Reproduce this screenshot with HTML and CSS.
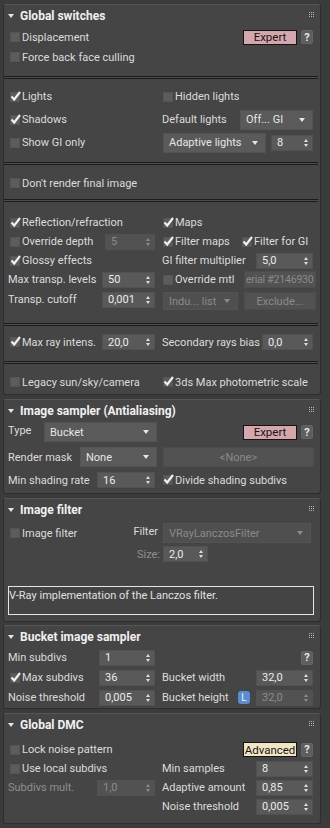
FILE: index.html
```html
<!DOCTYPE html>
<html>
<head>
<meta charset="utf-8">
<link rel="stylesheet" href="styles.css">
</head>
<body>
<div class="wrap">

<section class="roll r1">
  <header class="hd"><span class="tri"></span><span class="ttl">Global switches</span><svg class="grip" viewBox="0 0 5 5"><path d="M0 0h1v1H0zM2 0h1v1H2zM4 0h1v1H4zM0 2h1v1H0zM2 2h1v1H2zM4 2h1v1H4zM0 4h1v1H0zM2 4h1v1H2zM4 4h1v1H4z"/></svg></header>
  <div class="body">
    <div class="grp g1">
      <div class="row h20"><div class="cell l"><span class="chk"><i class="box"></i>Displacement</span></div><div class="cell r"><span class="btn expert">Expert</span><span class="q">?</span></div></div>
      <div class="row h20"><div class="cell l"><span class="chk"><i class="box"></i>Force back face culling</span></div><div class="cell r"></div></div>
    </div>
    <div class="sep"></div>
    <div class="grp g2">
      <div class="row h23"><div class="cell l"><span class="chk"><i class="box"><svg class="ck" viewBox="0 0 12 12"><path d="M1.5 6.5L4.2 9.5L10 2"/></svg></i>Lights</span></div><div class="cell r"><span class="chk"><i class="box"></i>Hidden lights</span></div></div>
      <div class="row h23"><div class="cell l"><span class="chk"><i class="box"><svg class="ck" viewBox="0 0 12 12"><path d="M1.5 6.5L4.2 9.5L10 2"/></svg></i>Shadows</span></div><div class="cell r"><span class="lbl">Default lights</span><span class="dd w73">Off... GI</span></div></div>
      <div class="row h23"><div class="cell l"><span class="chk"><i class="box"></i>Show GI only</span></div><div class="cell r"><span class="dd w103 first">Adaptive lights</span><span class="spin w42">8<i class="arr"></i></span></div></div>
    </div>
    <div class="sep"></div>
    <div class="grp g3">
      <div class="row h20"><div class="cell l"><span class="chk"><i class="box"></i>Don't render final image</span></div><div class="cell r"></div></div>
    </div>
    <div class="sep"></div>
    <div class="grp g4">
      <div class="row h19"><div class="cell l"><span class="chk"><i class="box"><svg class="ck" viewBox="0 0 12 12"><path d="M1.5 6.5L4.2 9.5L10 2"/></svg></i>Reflection/refraction</span></div><div class="cell r"><span class="chk"><i class="box"><svg class="ck" viewBox="0 0 12 12"><path d="M1.5 6.5L4.2 9.5L10 2"/></svg></i>Maps</span></div></div>
      <div class="row h19"><div class="cell l"><span class="chk"><i class="box"></i>Override depth</span><span class="spin w50 dis">5<i class="arr"></i></span></div><div class="cell r"><span class="chk fm"><i class="box"><svg class="ck" viewBox="0 0 12 12"><path d="M1.5 6.5L4.2 9.5L10 2"/></svg></i>Filter maps</span><span class="chk"><i class="box"><svg class="ck" viewBox="0 0 12 12"><path d="M1.5 6.5L4.2 9.5L10 2"/></svg></i>Filter for GI</span></div></div>
      <div class="row h19"><div class="cell l"><span class="chk"><i class="box"><svg class="ck" viewBox="0 0 12 12"><path d="M1.5 6.5L4.2 9.5L10 2"/></svg></i>Glossy effects</span></div><div class="cell r"><span class="lbl">GI filter multiplier</span><span class="spin w57">5,0<i class="arr"></i></span></div></div>
      <div class="row h19"><div class="cell l"><span class="lbl0">Max transp. levels</span><span class="spin w53">50<i class="arr"></i></span></div><div class="cell r"><span class="chk"><i class="box"></i>Override mtl</span><span class="field w72">erial #2146930</span></div></div>
      <div class="row h19"><div class="cell l"><span class="lbl0">Transp. cutoff</span><span class="spin w53">0,001<i class="arr"></i></span></div><div class="cell r"><span class="dd w75 first dis sm">Indu... list</span><span class="btn dbtn w72">Exclude...</span></div></div>
    </div>
    <div class="sep"></div>
    <div class="grp g5">
      <div class="row h20"><div class="cell l"><span class="chk"><i class="box"><svg class="ck" viewBox="0 0 12 12"><path d="M1.5 6.5L4.2 9.5L10 2"/></svg></i>Max ray intens.</span><span class="spin w53">20,0<i class="arr"></i></span></div><div class="cell r"><span class="lbl">Secondary rays bias</span><span class="spin w51">0,0<i class="arr"></i></span></div></div>
    </div>
    <div class="sep"></div>
    <div class="grp g6">
      <div class="row h20"><div class="cell l"><span class="chk"><i class="box"></i>Legacy sun/sky/camera</span></div><div class="cell r"><span class="chk"><i class="box"><svg class="ck" viewBox="0 0 12 12"><path d="M1.5 6.5L4.2 9.5L10 2"/></svg></i>3ds Max photometric scale</span></div></div>
    </div>
  </div>
</section>

<section class="roll r2">
  <header class="hd"><span class="tri"></span><span class="ttl">Image sampler (Antialiasing)</span><svg class="grip" viewBox="0 0 5 5"><path d="M0 0h1v1H0zM2 0h1v1H2zM4 0h1v1H4zM0 2h1v1H0zM2 2h1v1H2zM4 2h1v1H4zM0 4h1v1H0zM2 4h1v1H2zM4 4h1v1H4z"/></svg></header>
  <div class="body b2">
    <div class="row h22"><div class="cell l"><span class="lbl0 up">Type</span><span class="dd w113 over">Bucket</span></div><div class="cell r"><span class="btn expert">Expert</span><span class="q">?</span></div></div>
    <div class="row h22 mt3"><div class="cell l"><span class="lbl0">Render mask</span><span class="dd w77 over">None</span></div><div class="cell r"><span class="btn dbtn w151 first">&lt;None&gt;</span></div></div>
    <div class="row h18 mt3"><div class="cell l"><span class="lbl0">Min shading rate</span><span class="spin w58">16<i class="arr"></i></span></div><div class="cell r"><span class="chk"><i class="box"><svg class="ck" viewBox="0 0 12 12"><path d="M1.5 6.5L4.2 9.5L10 2"/></svg></i>Divide shading subdivs</span></div></div>
  </div>
</section>

<section class="roll r3">
  <header class="hd"><span class="tri"></span><span class="ttl">Image filter</span><svg class="grip" viewBox="0 0 5 5"><path d="M0 0h1v1H0zM2 0h1v1H2zM4 0h1v1H4zM0 2h1v1H0zM2 2h1v1H2zM4 2h1v1H4zM0 4h1v1H0zM2 4h1v1H2zM4 4h1v1H4z"/></svg></header>
  <div class="body b3">
    <div class="row h22"><div class="cell l"><span class="chk"><i class="box"></i>Image filter</span><span class="lbl0 flt">Filter</span></div><div class="cell r"><span class="dd w148 first dis">VRayLanczosFilter</span></div></div>
    <div class="row h18 mt1"><div class="cell l"><span class="lbl0 size dtxt">Size:</span></div><div class="cell r"><span class="spin w45 first">2,0<i class="arr"></i></span></div></div>
    <div class="desc">V-Ray implementation of the Lanczos filter.</div>
  </div>
</section>

<section class="roll r4">
  <header class="hd"><span class="tri"></span><span class="ttl">Bucket image sampler</span><svg class="grip" viewBox="0 0 5 5"><path d="M0 0h1v1H0zM2 0h1v1H2zM4 0h1v1H4zM0 2h1v1H0zM2 2h1v1H2zM4 2h1v1H4zM0 4h1v1H0zM2 4h1v1H2zM4 4h1v1H4z"/></svg></header>
  <div class="body b4">
    <div class="row h19"><div class="cell l"><span class="lbl0">Min subdivs</span><span class="spin w56">1<i class="arr"></i></span></div><div class="cell r"><span class="q">?</span></div></div>
    <div class="row h19 mt1"><div class="cell l"><span class="chk"><i class="box"><svg class="ck" viewBox="0 0 12 12"><path d="M1.5 6.5L4.2 9.5L10 2"/></svg></i>Max subdivs</span><span class="spin w56">36<i class="arr"></i></span></div><div class="cell r"><span class="lbl">Bucket width</span><span class="spin w57">32,0<i class="arr"></i></span></div></div>
    <div class="row h19 mt1"><div class="cell l"><span class="lbl0">Noise threshold</span><span class="spin w56">0,005<i class="arr"></i></span></div><div class="cell r"><span class="lbl">Bucket height</span><span class="lock">L</span><span class="spin w57 dis gap6">32,0<i class="arr"></i></span></div></div>
  </div>
</section>

<section class="roll r5">
  <header class="hd"><span class="tri"></span><span class="ttl">Global DMC</span><svg class="grip" viewBox="0 0 5 5"><path d="M0 0h1v1H0zM2 0h1v1H2zM4 0h1v1H4zM0 2h1v1H0zM2 2h1v1H2zM4 2h1v1H4zM0 4h1v1H0zM2 4h1v1H2zM4 4h1v1H4z"/></svg></header>
  <div class="body b5">
    <div class="row h19"><div class="cell l"><span class="chk"><i class="box"></i>Lock noise pattern</span></div><div class="cell r"><span class="btn adv">Advanced</span><span class="q">?</span></div></div>
    <div class="row h19"><div class="cell l"><span class="chk"><i class="box"></i>Use local subdivs</span></div><div class="cell r"><span class="lbl">Min samples</span><span class="spin w57">8<i class="arr"></i></span></div></div>
    <div class="row h19"><div class="cell l"><span class="lbl0 dtxt">Subdivs mult.</span><span class="spin w58 dis">1,0<i class="arr"></i></span></div><div class="cell r"><span class="lbl">Adaptive amount</span><span class="spin w57">0,85<i class="arr"></i></span></div></div>
    <div class="row h19"><div class="cell l"></div><div class="cell r"><span class="lbl">Noise threshold</span><span class="spin w57">0,005<i class="arr"></i></span></div></div>
  </div>
</section>

</div>
</body>
</html>
```

FILE: styles.css
```css
* { box-sizing: border-box; }
html, body { margin: 0; padding: 0; }
body {
  width: 330px;
  height: 828px;
  overflow: hidden;
  background: #3b3b3b;
  font-family: Roboto, "Liberation Sans", Arial, sans-serif;
  font-size: 11px;
  color: #dcdcdc;
}
.wrap {
  display: flex;
  flex-direction: column;
  padding: 4px 9px 0 3px;
}
.roll {
  background: #454545;
  border: 1px solid #2e2e2e;
  border-top-color: #565656;
  border-radius: 3px;
}
.r2, .r3, .r5 { margin-top: 4px; }
.r4 { margin-top: 3px; }

/* header */
.hd {
  height: 21px;
  display: flex;
  align-items: center;
  padding: 0 6px 0 4px;
}
.tri {
  width: 0; height: 0;
  border-left: 3px solid transparent;
  border-right: 3px solid transparent;
  border-top: 4px solid #e6e6e6;
  margin-right: 6px;
}
.ttl {
  font-weight: 700;
  font-size: 12px;
  color: #f0f0f0;
}
.grip {
  width: 5px; height: 5px;
  margin-left: auto;
  margin-top: -3px;
  fill: #b4b4b4;
}

.body { padding: 0 6px 0 4px; }
.b2 { padding-bottom: 4px; }
.b3 { padding-top: 2px; padding-bottom: 6px; }
.b4 { padding-top: 1px; padding-bottom: 1px; }
.b5 { padding-top: 5px; padding-bottom: 7px; }

.g1 { padding: 1px 0 9px; }
.g2 { padding: 6px 0 8px; }
.g3 { padding: 8px 0 6px; }
.g4 { padding: 11px 0 15px; }
.g5 { padding: 6px 0 9px; }
.g6 { padding: 8px 0 2px; }

.sep {
  height: 3px;
  border-top: 1px solid #1b1b1b;
  border-bottom: 1px solid #1b1b1b;
  background: #4d4d4d;
  margin: 0 -4px 0 -4px;
}

.row {
  display: grid;
  grid-template-columns: 153px 153px;
  align-items: center;
}
.h18 { height: 18px; }
.h19 { height: 19px; }
.h20 { height: 20px; }
.h22 { height: 22px; }
.h23 { height: 23px; }
.mt1 { margin-top: 1px; }
.mt3 { margin-top: 3px; }

.cell {
  display: flex;
  align-items: center;
  height: 100%;
  white-space: nowrap;
}
.cell.l { padding-right: 6px; }
.cell.r { padding-right: 1px; }

/* checkbox */
.chk {
  display: flex;
  align-items: center;
  white-space: nowrap;
}
.box {
  position: relative;
  width: 10px;
  height: 10px;
  margin: 0 2px;
  background: #5c5c5c;
  border: 1px solid #555555;
  flex: none;
}
.ck {
  position: absolute;
  left: -1px;
  top: -3px;
  width: 12px;
  height: 12px;
  fill: none;
  stroke: #f2f2f2;
  stroke-width: 2.1;
}
.chk.fm { width: 79px; }

.lbl { margin-left: 1px; }
.up { margin-top: -3px; }
.dtxt { color: #8e8e8e; }
.flt { margin-left: auto; margin-right: -3px; margin-top: -3px; }
.size { margin-left: auto; margin-right: -5px; }

/* spinner */
.spin {
  position: relative;
  display: flex;
  align-items: center;
  height: 16px;
  margin-left: auto;
  padding-left: 5px;
  background: #595959;
  border: 1px solid #515151;
  color: #ececec;
  flex: none;
}
.spin.first { margin-left: 2px; }
.spin.gap6 { margin-left: 6px; }
.spin.dis { color: #8c8c8c; background: #525252; }
.arr {
  margin-left: auto;
  margin-right: 4px;
  display: flex;
  flex-direction: column;
  gap: 2px;
}
.arr::before, .arr::after {
  content: "";
  width: 0; height: 0;
  border-left: 2.5px solid transparent;
  border-right: 2.5px solid transparent;
}
.arr::before { border-bottom: 3px solid #dedede; }
.arr::after { border-top: 3px solid #dedede; }
.spin.dis .arr::before { border-bottom-color: #8a8a8a; }
.spin.dis .arr::after { border-top-color: #8a8a8a; }

/* dropdown */
.dd {
  display: flex;
  align-items: center;
  height: 20px;
  margin-left: auto;
  padding-left: 5px;
  background: #5a5a5a;
  border: 1px solid #535353;
  color: #e6e6e6;
  flex: none;
}
.dd::after {
  content: "";
  margin-left: auto;
  margin-right: 7px;
  width: 0; height: 0;
  border-left: 3px solid transparent;
  border-right: 3px solid transparent;
  border-top: 4px solid #e6e6e6;
}
.dd.first { margin-left: 2px; }
.dd.over { margin-right: -2px; }
.dd.dis { color: #8a8a8a; background: #4f4f4f; }
.dd.dis::after { border-top-color: #8a8a8a; }
.dd.sm { height: 18px; margin-top: 3px; }

/* widths */
.w42 { width: 42px; }
.w45 { width: 45px; }
.w50 { width: 50px; }
.w51 { width: 51px; }
.w53 { width: 53px; }
.w56 { width: 56px; }
.w57 { width: 57px; }
.w58 { width: 58px; }
.w72 { width: 72px; }
.w73 { width: 73px; }
.w75 { width: 75px; }
.w77 { width: 77px; }
.w103 { width: 103px; }
.w113 { width: 113px; }
.w148 { width: 148px; }
.w151 { width: 151px; }

/* buttons */
.btn {
  display: flex;
  align-items: center;
  justify-content: center;
  flex: none;
}
.expert, .adv {
  width: 54px;
  height: 15px;
  margin-left: auto;
  border: 1px solid #141414;
  color: #161616;
  font-size: 11.5px;
}
.expert { background: #d5a7ad; }
.adv { background: #f2e5c3; }
.q {
  width: 12px;
  height: 14px;
  margin-left: 4px;
  border-radius: 2px;
  background: #5e5e5e;
  border: 1px solid #656565;
  color: #e8e8e8;
  font-weight: 700;
  font-size: 11px;
  display: flex;
  align-items: center;
  justify-content: center;
  flex: none;
}
.cell.r > .q:first-child { margin-left: auto; }
.dbtn {
  height: 18px;
  margin-left: auto;
  background: #525252;
  border: 1px solid #4c4c4c;
  color: #8a8a8a;
}
.dbtn.w72 { margin-right: -3px; margin-top: 3px; }
.dbtn.first { margin-left: 2px; height: 20px; margin-right: -1px; }
.field {
  display: flex;
  align-items: center;
  height: 17px;
  margin-left: auto;
  margin-right: -3px;
  padding-left: 1px;
  background: #525252;
  border: 1px solid #4c4c4c;
  color: #8a8a8a;
  font-size: 10.5px;
  letter-spacing: -0.2px;
  flex: none;
}
.lock {
  width: 12px;
  height: 13px;
  margin-left: auto;
  border-radius: 3px;
  background: #5a8cd2;
  color: #f4f4f4;
  font-size: 10px;
  display: flex;
  align-items: center;
  justify-content: center;
  flex: none;
}

.desc {
  margin-top: 23px;
  height: 29px;
  border: 1px solid #e4e4e4;
  background: #444444;
  color: #e0e0e0;
  padding: 2px 0 0 0;
  white-space: nowrap;
}
```
